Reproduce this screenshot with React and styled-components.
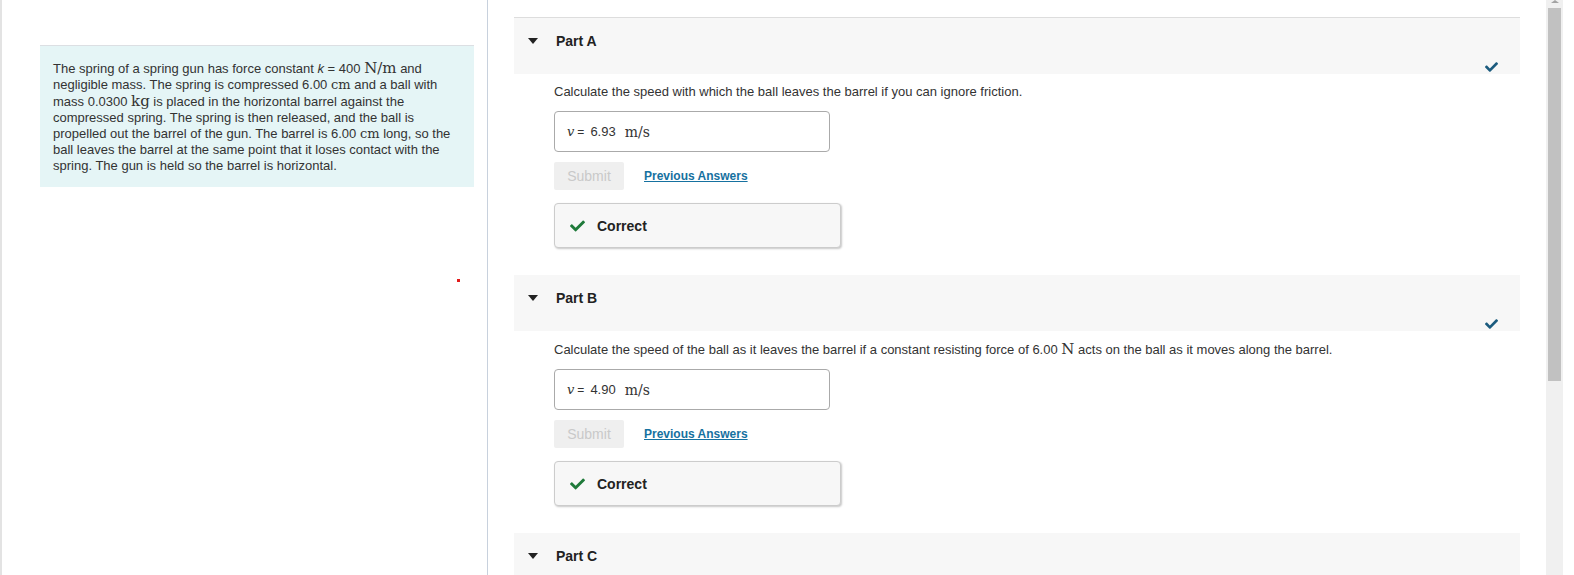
import React from "react";
import styled, { createGlobalStyle } from "styled-components";

const Global = createGlobalStyle`
  html, body { margin: 0; padding: 0; background: #fff; overflow: hidden; }
  body { font-family: "Liberation Sans", Arial, sans-serif; color: #333; }
  * { box-sizing: border-box; }
`;

const Page = styled.div`
  display: flex;
  height: 575px;
  width: 1574px;
`;

const LeftPane = styled.aside`
  width: 488px;
  flex: none;
  border-left: 2px solid #e3e3e3;
  border-right: 1px solid #c8d1dd;
  padding: 45px 0 0 38px;
`;

const ProblemBox = styled.div`
  width: 434px;
  background: #e5f5f6;
  border-top: 1px solid #dcdfe3;
  padding: 14px 16px 13px 13px;
  font-size: 13px;
  line-height: 16px;
  color: #333;
  white-space: nowrap;
`;

const Math = styled.span`
  font-family: "DejaVu Serif", "Liberation Serif", serif;
  font-size: ${(p) => p.$size || 14}px;
  color: #333;
`;

const Var = styled.i`
  font-family: ${(p) => (p.$serif ? `"DejaVu Serif", "Liberation Serif", serif` : `"Liberation Sans", Arial, sans-serif`)};
  font-size: ${(p) => p.$size || 13}px;
`;

const Dot = styled.div`
  width: 3px;
  height: 3px;
  background: #e21b1b;
  margin: 92px 0 0 417px;
`;

const RightPane = styled.main`
  flex: 1;
  padding: 17px 26px 0 26px;
  overflow: hidden;
`;

const PartHeader = styled.div`
  display: flex;
  justify-content: space-between;
  align-items: flex-start;
  height: ${(p) => (p.$topBorder ? 57 : 56)}px;
  background: #f7f7f7;
  border-top: ${(p) => (p.$topBorder ? "1px solid #dddddd" : "none")};
`;

const Title = styled.div`
  display: flex;
  align-items: center;
  gap: 18px;
  padding: 15px 0 0 14px;
  font-size: 14px;
  font-weight: bold;
  line-height: 16px;
  color: #222;
`;

const HeaderCheck = styled.svg`
  align-self: flex-end;
  margin: 0 22px 2px 0;
  width: 13px;
  height: 10px;
`;

const PartBody = styled.div`
  padding: 10px 0 27px 40px;
  display: flex;
  flex-direction: column;
  align-items: flex-start;
`;

const Question = styled.p`
  margin: 0;
  font-size: 13px;
  line-height: 16px;
  color: #333;
`;

const AnswerBox = styled.div`
  margin-top: 11px;
  width: 276px;
  height: 41px;
  border: 1px solid #aaaaaa;
  border-radius: 4px;
  display: flex;
  align-items: center;
  padding-left: 12px;
  font-size: 12px;
  color: #333;
`;

const Eq = styled.span`
  margin: 0 6px 0 3px;
  font-size: 12px;
`;

const Value = styled.span`
  margin-right: 9px;
  font-size: 13px;
`;

const ActionRow = styled.div`
  margin-top: 10px;
  display: flex;
  align-items: center;
  gap: 20px;
`;

const SubmitButton = styled.button`
  width: 70px;
  height: 28px;
  border: none;
  border-radius: 2px;
  background: #efefef;
  color: #c9c9c9;
  font-family: "Liberation Sans", Arial, sans-serif;
  font-size: 14px;
  padding: 0;
`;

const PrevLink = styled.a`
  font-size: 12px;
  font-weight: bold;
  color: #1671a0;
  text-decoration: underline;
`;

const CorrectBox = styled.div`
  margin-top: 13px;
  width: 287px;
  height: 45px;
  background: #f7f7f7;
  border: 1px solid #cccccc;
  border-radius: 4px;
  box-shadow: 1px 1px 2px rgba(0, 0, 0, 0.22);
  display: flex;
  align-items: center;
  gap: 12px;
  padding-left: 15px;
  font-size: 14px;
  font-weight: bold;
  color: #222;
`;

const ScrollTrack = styled.div`
  width: 17px;
  flex: none;
  background: #f0f0f0;
  display: flex;
  flex-direction: column;
  align-items: center;
`;

const ScrollArrow = styled.div`
  width: 0;
  height: 0;
  border-left: 4px solid transparent;
  border-right: 4px solid transparent;
  border-bottom: 3px solid #a3a3a3;
`;

const ScrollThumb = styled.div`
  margin-top: 5px;
  width: 13px;
  height: 373px;
  background: #c1c1c1;
`;

const RightGutter = styled.div`
  width: 11px;
  flex: none;
  background: #fff;
`;

const CHECK =
  "M173.898 439.404l-166.4-166.4c-9.997-9.997-9.997-26.206 0-36.204l36.203-36.204c9.997-9.998 26.207-9.998 36.204 0L192 312.69 432.095 72.596c9.997-9.997 26.207-9.997 36.204 0l36.203 36.204c9.997 9.997 9.997 26.206 0 36.204l-294.4 294.401c-9.998 9.997-26.207 9.997-36.204-.001z";

const Caret = () => (
  <svg width="10" height="6" viewBox="0 0 10 6">
    <polygon points="0,0 10,0 5,6" fill="#222" />
  </svg>
);

const CorrectCheck = () => (
  <svg width="15" height="12" viewBox="0 64 512 384">
    <path d={CHECK} fill="#1f7a3a" />
  </svg>
);

const Part = ({ label, topBorder, question, value, open = true }) => (
  <section>
    <PartHeader $topBorder={topBorder}>
      <Title>
        <Caret />
        {label}
      </Title>
      {open && (
        <HeaderCheck viewBox="0 64 512 384">
          <path d={CHECK} fill="#1b5b7e" />
        </HeaderCheck>
      )}
    </PartHeader>
    {open && (
      <PartBody>
        <Question>{question}</Question>
        <AnswerBox>
          <Var $serif $size={13}>v</Var>
          <Eq>=</Eq>
          <Value>{value}</Value>
          <Math $size={14}>m/s</Math>
        </AnswerBox>
        <ActionRow>
          <SubmitButton disabled>Submit</SubmitButton>
          <PrevLink href="#">Previous Answers</PrevLink>
        </ActionRow>
        <CorrectBox>
          <CorrectCheck />
          Correct
        </CorrectBox>
      </PartBody>
    )}
  </section>
);

export default function App() {
  return (
    <>
      <Global />
      <Page>
        <LeftPane>
          <ProblemBox>
            The spring of a spring gun has force constant <Var>k</Var> = 400 <Math $size={15}>N/m</Math> and
            <br />
            negligible mass. The spring is compressed 6.00 <Math $size={13}>cm</Math> and a ball with
            <br />
            mass 0.0300 <Math $size={15}>kg</Math> is placed in the horizontal barrel against the
            <br />
            compressed spring. The spring is then released, and the ball is
            <br />
            propelled out the barrel of the gun. The barrel is 6.00 <Math $size={13}>cm</Math> long, so the
            <br />
            ball leaves the barrel at the same point that it loses contact with the
            <br />
            spring. The gun is held so the barrel is horizontal.
          </ProblemBox>
          <Dot />
        </LeftPane>
        <RightPane>
          <Part
            label="Part A"
            topBorder
            question="Calculate the speed with which the ball leaves the barrel if you can ignore friction."
            value="6.93"
          />
          <Part
            label="Part B"
            question={
              <>
                Calculate the speed of the ball as it leaves the barrel if a constant resisting force of 6.00{" "}
                <Math $size={15}>N</Math> acts on the ball as it moves along the barrel.
              </>
            }
            value="4.90"
          />
          <Part label="Part C" open={false} />
        </RightPane>
        <ScrollTrack>
          <ScrollArrow />
          <ScrollThumb />
        </ScrollTrack>
        <RightGutter />
      </Page>
    </>
  );
}
